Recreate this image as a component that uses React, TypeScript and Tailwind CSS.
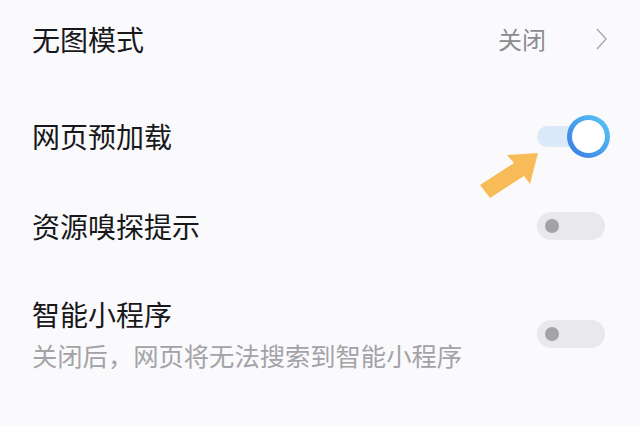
import React from "react";

const font = { fontFamily: '"Noto Sans CJK SC", "Noto Sans", sans-serif' };

function OffToggle() {
  return (
    <div className="w-[68px] h-[28px] rounded-full bg-[#e9e9ed] flex items-center pl-[8px] mr-[3px]">
      <div className="w-[14px] h-[14px] rounded-full bg-[#a3a3a7]" />
    </div>
  );
}

function OnToggle() {
  return (
    <div className="relative w-[73px] h-[43px] flex items-center -mr-[2px]">
      <div className="w-[50px] h-[21px] rounded-full bg-[#dce9f9]" />
      <div className="absolute right-0 top-0 w-[43px] h-[43px] rounded-full bg-gradient-to-tr from-[#3a78e4] to-[#5cc8f6] p-[5px]">
        <div className="w-full h-full rounded-full bg-white" />
      </div>
    </div>
  );
}

export default function App() {
  return (
    <div className="relative w-[640px] h-[426px] bg-[#fafafc] overflow-hidden text-[#18181a]" style={font}>
      <div className="flex flex-col px-[32px]">
        <div className="flex items-center justify-between mt-[25px] h-[28px]">
          <span className="text-[28px] leading-[28px]">无图模式</span>
          <div className="flex items-center mr-[1px]">
            <span className="text-[24px] leading-[28px] text-[#8c8c90]">关闭</span>
            <svg width="11" height="22" viewBox="0 0 11 22" className="ml-[50px]">
              <polyline points="1,1 10,11 1,21" fill="none" stroke="#a9a9ad" strokeWidth="1.4" />
            </svg>
          </div>
        </div>
        <div className="flex items-center justify-between mt-[69px] h-[28px]">
          <span className="text-[28px] leading-[28px]">网页预加载</span>
          <OnToggle />
        </div>
        <div className="flex items-center justify-between mt-[62px] h-[28px]">
          <span className="text-[28px] leading-[28px]">资源嗅探提示</span>
          <OffToggle />
        </div>
        <div className="flex items-center justify-between mt-[60px]">
          <div className="flex flex-col">
            <span className="text-[28px] leading-[28px]">智能小程序</span>
            <span className="text-[25.3px] leading-[25px] text-[#a3a3a7] mt-[15px]">关闭后，网页将无法搜索到智能小程序</span>
          </div>
          <OffToggle />
        </div>
      </div>
      <svg className="absolute left-0 top-0" width="640" height="426" viewBox="0 0 640 426">
        <polygon
          points="538,153 507,155 514,163 480,185 490,198 524,176 530,184"
          fill="#f7bc58"
        />
      </svg>
    </div>
  );
}
